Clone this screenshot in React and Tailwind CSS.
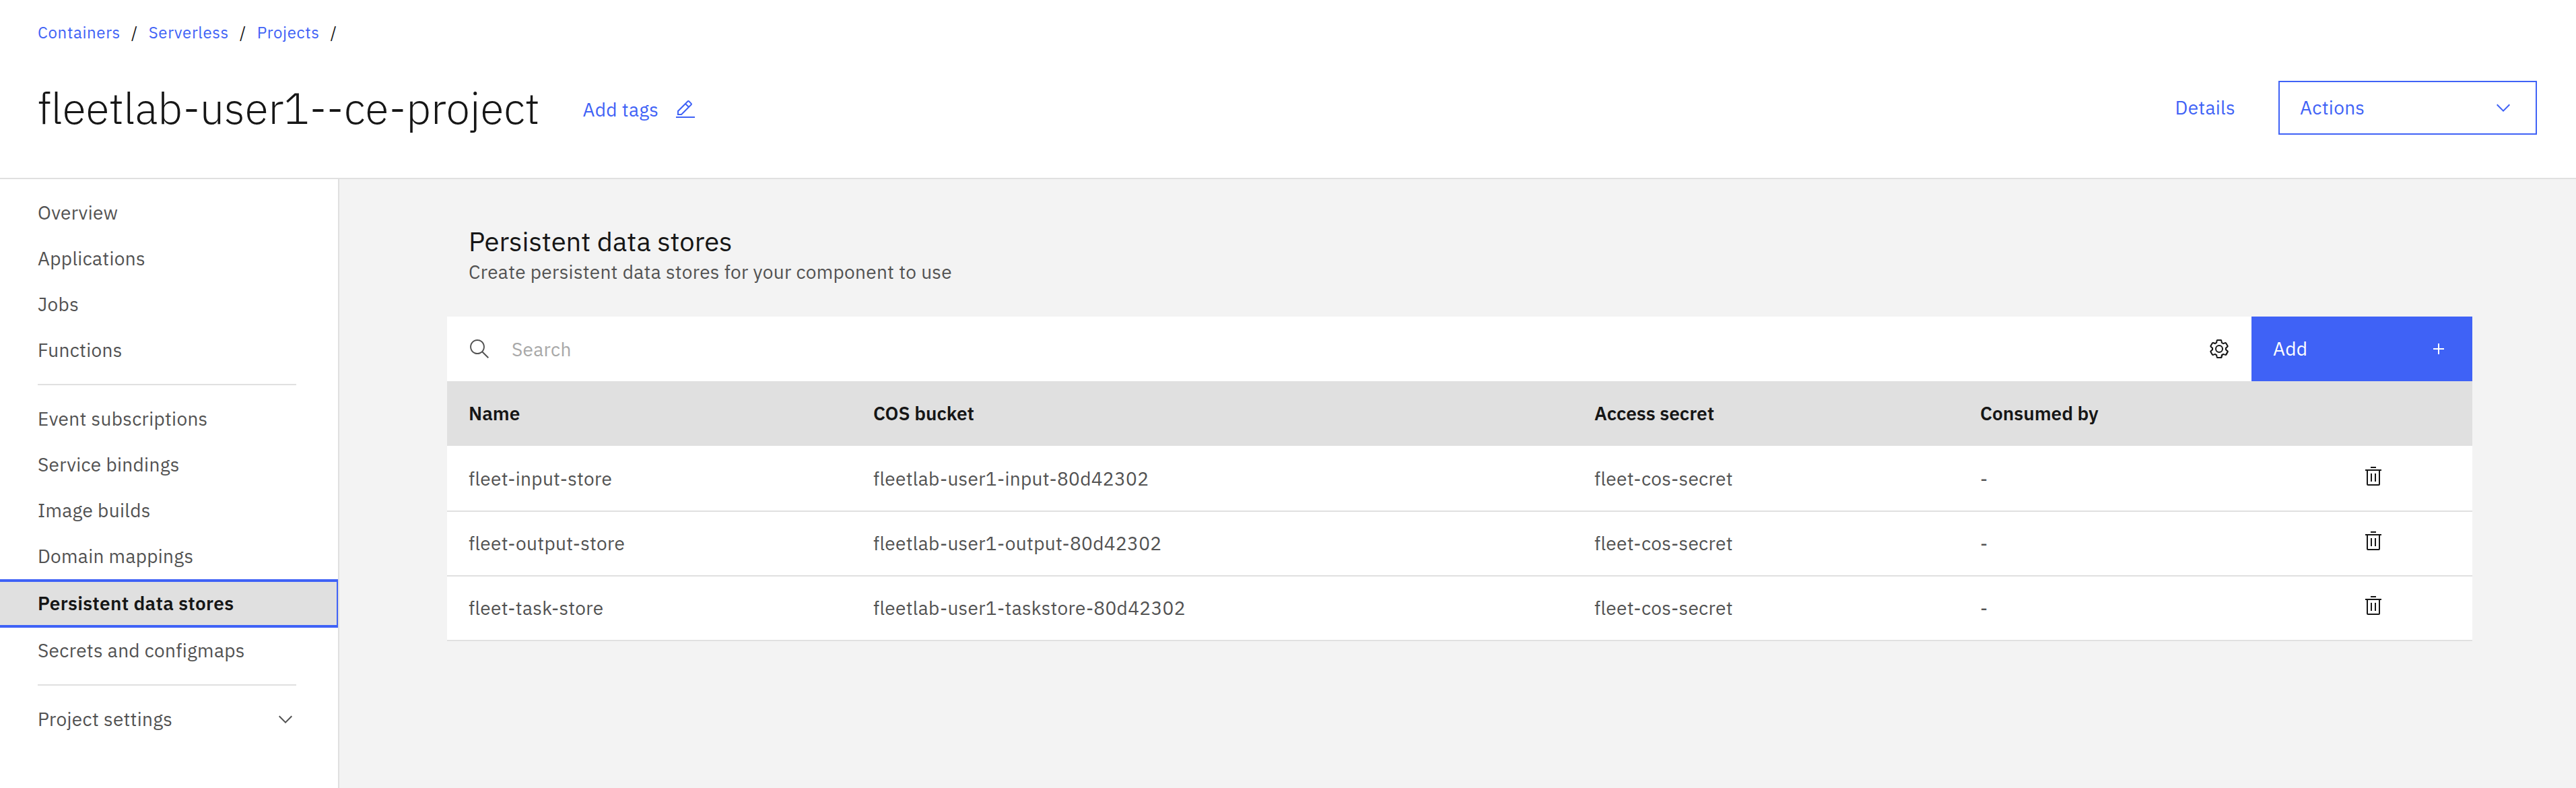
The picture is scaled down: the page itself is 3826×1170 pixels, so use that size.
import React from "react";

function Icon({ size = 32, box = 32, className = "", children }) {
  return (
    <svg
      width={size}
      height={size}
      viewBox={`0 0 ${box} ${box}`}
      fill="currentColor"
      aria-hidden="true"
      className={`block shrink-0 ${className}`}
    >
      {children}
    </svg>
  );
}

const ChevronDown = (props) => (
  <Icon box={16} {...props}>
    <path d="M8 11L3 6 3.7 5.3 8 9.6 12.3 5.3 13 6z" />
  </Icon>
);

const EditIcon = (props) => (
  <Icon {...props}>
    <path d="M2 26H30V28H2zM25.4 9c.8-.8.8-2 0-2.8l-3.6-3.6c-.8-.8-2-.8-2.8 0L4 17.6V24h6.4L25.4 9zM20.4 4L24 7.6l-3 3L17.4 7 20.4 4zM6 22v-3.6l10-10 3.6 3.6-10 10H6z" />
  </Icon>
);

const SearchIcon = (props) => (
  <Icon box={16} {...props}>
    <path d="M15 14.3L10.7 10c1.9-2.3 1.6-5.8-.7-7.7S4.2.7 2.3 3 .7 8.8 3 10.7c2 1.7 5 1.7 7 0l4.3 4.3.7-.7zM2 6.5C2 4 4 2 6.5 2S11 4 11 6.5 9 11 6.5 11 2 9 2 6.5z" />
  </Icon>
);

const GearIcon = (props) => (
  <Icon box={16} {...props}>
    <path d="M13.5 8.4c0-.1 0-.3 0-.4 0-.1 0-.3 0-.4l1-.8c.4-.3.4-.9.2-1.3l-1.2-2C13.3 3.2 13 3 12.6 3c-.1 0-.2 0-.3.1l-1.2.4c-.2-.1-.4-.3-.7-.4l-.3-1.3C10.1 1.3 9.7 1 9.2 1H6.8c-.5 0-.9.3-1 .8L5.6 3.1c-.3.1-.5.2-.7.3L3.7 3C3.6 3 3.5 3 3.4 3 3 3 2.7 3.2 2.5 3.5l-1.2 2c-.2.4-.2.9.2 1.3l1 .8c0 .1 0 .3 0 .4 0 .1 0 .3 0 .4l-1 .8c-.4.3-.4.9-.2 1.3l1.2 2c.2.3.5.5.9.5.1 0 .2 0 .3-.1l1.2-.4c.2.1.4.3.7.4l.3 1.3c.1.5.5.8 1 .8h2.4c.5 0 .9-.3 1-.8l.3-1.3c.2-.1.4-.2.7-.4l1.2.4c.1 0 .2.1.3.1.4 0 .7-.2.9-.5l1.1-2c.2-.4.2-.9-.2-1.3l-1.1-.8zM12.6 12l-1.7-.6c-.4.3-.9.6-1.4.8L9.2 14H6.8l-.3-1.8c-.5-.2-1-.5-1.4-.8L3.4 12l-1.2-2 1.4-1.2c-.1-.5-.1-1.1 0-1.6L2.2 6l1.2-2 1.7.6C5.5 4.3 6 4 6.5 3.8L6.8 2h2.4l.3 1.8c.5.2 1 .5 1.4.8L12.6 4l1.2 2-1.4 1.2c.1.5.1 1.1 0 1.6l1.4 1.2-1.2 2z" />
    <path fillRule="evenodd" d="M8 11a3 3 0 1 1 0-6 3 3 0 0 1 0 6zM8 6a2 2 0 1 0 0 4 2 2 0 0 0 0-4z" />
  </Icon>
);

const AddIcon = (props) => (
  <Icon {...props}>
    <path d="M17 15V8h-2v7H8v2h7v7h2v-7h7v-2z" />
  </Icon>
);

const TrashIcon = (props) => (
  <Icon {...props}>
    <path d="M12 12h2v12h-2zM18 12h2v12h-2zM12 2h8v2h-8z" />
    <path d="M4 6v2h2v20a2 2 0 0 0 2 2h16a2 2 0 0 0 2-2V8h2V6H4zm4 22V8h16v20H8z" />
  </Icon>
);

const crumbs = ["Containers", "Serverless", "Projects"];

const navGroups = [
  ["Overview", "Applications", "Jobs", "Functions"],
  [
    "Event subscriptions",
    "Service bindings",
    "Image builds",
    "Domain mappings",
    "Persistent data stores",
    "Secrets and configmaps",
  ],
];

const activeItem = "Persistent data stores";

const stores = [
  { name: "fleet-input-store", bucket: "fleetlab-user1-input-80d42302", secret: "fleet-cos-secret", used: "-" },
  { name: "fleet-output-store", bucket: "fleetlab-user1-output-80d42302", secret: "fleet-cos-secret", used: "-" },
  { name: "fleet-task-store", bucket: "fleetlab-user1-taskstore-80d42302", secret: "fleet-cos-secret", used: "-" },
];

function Header() {
  return (
    <header className="h-[266px] shrink-0 border-b-2 border-[#e0e0e0] bg-white pt-8 pr-[58px] pl-14">
      <nav className="flex h-8 items-center gap-4 text-[24px] leading-8 tracking-[0.64px]">
        {crumbs.map((label) => (
          <React.Fragment key={label}>
            <a className="text-[#3f62f6]">{label}</a>
            <span className="text-[#161616]">/</span>
          </React.Fragment>
        ))}
      </nav>
      <div className="mt-14 flex h-20 items-center">
        <h1 className="text-[64px] leading-[80px] font-light tracking-normal text-[#161616]">
          fleetlab-user1--ce-project
        </h1>
        <a className="mt-1.5 ml-16 flex items-center gap-6 text-[#3f62f6]">
          Add tags
          <EditIcon />
        </a>
        <a className="ml-auto text-[#3f62f6]">Details</a>
        <button className="ml-16 flex h-20 w-96 items-center justify-between border-2 border-[#3f62f6] pr-8 pl-[30px] tracking-[0.32px] text-[#3f62f6]">
          Actions
          <ChevronDown />
        </button>
      </div>
    </header>
  );
}

function NavItem({ label }) {
  if (label === activeItem) {
    return (
      <li className="flex h-[72px] items-center border-y-4 border-r-2 border-[#3f62f6] bg-[#e0e0e0] pl-14 font-semibold text-[#161616]">
        {label}
      </li>
    );
  }
  return <li className="flex h-[68px] items-center pl-14">{label}</li>;
}

function Sidebar() {
  return (
    <aside className="w-[504px] shrink-0 border-r-2 border-[#e0e0e0] bg-white pt-4 text-[#525252]">
      {navGroups.map((items) => (
        <React.Fragment key={items[0]}>
          <ul>
            {items.map((label) => (
              <NavItem key={label} label={label} />
            ))}
          </ul>
          <div className="my-4 ml-14 h-0.5 w-96 bg-[#e0e0e0]" />
        </React.Fragment>
      ))}
      <div className="ml-14 flex h-[68px] w-96 items-center justify-between">
        Project settings
        <ChevronDown />
      </div>
    </aside>
  );
}

const columns = "grid grid-cols-[601px_1071px_573px_568px_1fr] items-center pl-8";

function StoreTable() {
  return (
    <section>
      <div className="flex h-24 bg-white">
        <div className="flex flex-1 items-center px-8">
          <SearchIcon className="text-[#525252]" />
          <span className="mt-0.5 ml-8 text-[#a8a8a8]">Search</span>
          <GearIcon className="ml-auto text-[#161616]" />
        </div>
        <button className="flex w-[328px] items-center justify-between bg-[#3f62f6] pr-[34px] pl-8 tracking-[0.32px] text-white">
          Add
          <AddIcon />
        </button>
      </div>
      <div className={`${columns} h-24 bg-[#e0e0e0] font-semibold tracking-normal text-[#161616]`}>
        <span>Name</span>
        <span>COS bucket</span>
        <span>Access secret</span>
        <span>Consumed by</span>
      </div>
      <div className="border-t-2 border-white">
        {stores.map((store) => (
          <div key={store.name} className={`${columns} h-24 border-b-2 border-[#e0e0e0] bg-white text-[#525252]`}>
            <span>{store.name}</span>
            <span>{store.bucket}</span>
            <span>{store.secret}</span>
            <span>{store.used}</span>
            <TrashIcon className="mb-2 text-[#161616]" />
          </div>
        ))}
      </div>
    </section>
  );
}

export default function App() {
  return (
    <div className="flex h-[1170px] w-[3826px] flex-col overflow-hidden bg-[#f3f3f3] font-['IBM_Plex_Sans',Roboto,sans-serif] text-[28px] leading-9 tracking-[0.32px]">
      <Header />
      <div className="flex min-h-0 flex-1">
        <Sidebar />
        <main className="flex-1 pt-16 pr-[154px] pl-40">
          <div className="mb-12 pl-8">
            <h2 className="text-[40px] leading-[56px] tracking-normal text-[#161616]">Persistent data stores</h2>
            <p className="text-[#525252]">Create persistent data stores for your component to use</p>
          </div>
          <StoreTable />
        </main>
      </div>
    </div>
  );
}
